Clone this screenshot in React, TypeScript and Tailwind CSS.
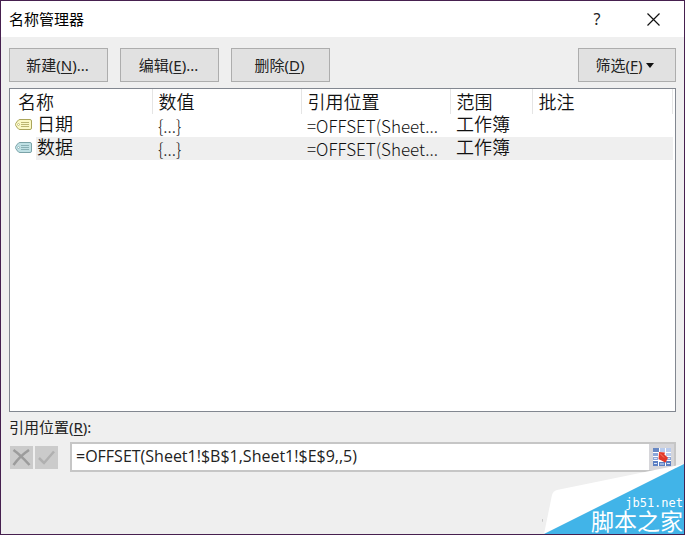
import { useState } from "react";

interface NameEntry {
  name: string;
  value: string;
  refersTo: string;
  scope: string;
  tone: "yellow" | "teal";
}

const entries: NameEntry[] = [
  { name: "日期", value: "{...}", refersTo: "=OFFSET(Sheet...", scope: "工作簿", tone: "yellow" },
  { name: "数据", value: "{...}", refersTo: "=OFFSET(Sheet...", scope: "工作簿", tone: "teal" },
];

function TagIcon({ tone }: { tone: NameEntry["tone"] }) {
  const [fill, stroke] = tone === "yellow" ? ["#fbf9c4", "#aba55c"] : ["#bfe0e4", "#7ba3a8"];
  return (
    <svg width="17" height="11" viewBox="0 0 17 11" fill="none" aria-hidden="true">
      <path d="M5 .5H15q1.500 0 1.500 1.500v7q0 1.500-1.500 1.500H5Q3.500 10.500 2.500 9L.7 6.500q-.5-1 0-2L2.500 2Q3.500.5 5 .5z" fill={fill} stroke={stroke} />
      <circle cx="3.500" cy="5.500" r="1" fill="#fff" stroke={stroke} strokeWidth=".6" />
      <path d="M6 3.500h8M6 5.500h8M6 7.500h8" stroke={stroke} strokeWidth=".8" />
    </svg>
  );
}

function RangePickerIcon() {
  return (
    <svg width="20" height="20" viewBox="0 0 20 20" aria-hidden="true">
      <path d="M1 1h18v18H1z" fill="#fff" />
      <path d="M1 1h6v4H1z" fill="#6687c4" />
      <path d="M8 1h5v4H8zM14 1h5v4h-5zM14 6h5v3h-5z" fill="#b9cbed" />
      <path d="M1 6h5v3H1zM1 10h5v3H1zM14 10h5v3h-5z" fill="#8ba6da" />
      <path d="M1 14h5v5H1zM7 15h6v4H7zM14 14h5v5h-5z" fill="#5b7fc3" />
      <path d="M2 16.500h3M8 17h4M15 16.500h3M2 11.500h3M15 11.500h3" stroke="#dce6f8" />
      <path d="M7 5l6 .5-.6 2 3.600 3.200-2.500 5-4.500-2.500-2.500-1z" fill="#e2382a" />
      <path d="M8 6.500l4 4" stroke="#f4836f" />
    </svg>
  );
}

function DialogButton({ text, hotkey, suffix }: { text: string; hotkey: string; suffix?: string }) {
  return (
    <button className="h-[34px] w-[99px] border border-[#adadad] bg-[#e1e1e1] pr-0.5 text-[15px] text-[#222]">
      {text}(<u className="underline-offset-2">{hotkey}</u>){suffix}
    </button>
  );
}

function Watermark() {
  return (
    <div className="pointer-events-none absolute right-0 bottom-0 h-[70px] w-[142px] text-white">
      <svg className="absolute inset-0" width="142" height="70" viewBox="0 0 142 70" aria-hidden="true">
        <path d="M0 55q1 4-3 4" stroke="#aaa" fill="none" />
        <path d="M2 70L10 31q1-4 5-5L142 0z" fill="#fff" />
        <path d="M2 70L142 0v70z" fill="#41b4e8" />
      </svg>
      <div className="relative flex h-full flex-col items-end justify-end pr-px">
        <span className="font-['DejaVu_Sans_Mono',monospace] text-xs leading-[14px]">jb51.net</span>
        <span className="font-['Liberation_Sans','Noto_Sans_CJK_SC',sans-serif] text-[23px] leading-6">脚本之家</span>
      </div>
    </div>
  );
}

export default function App() {
  const [formula, setFormula] = useState("=OFFSET(Sheet1!$B$1,Sheet1!$E$9,,5)");
  const [selected, setSelected] = useState(1);

  return (
    <div className="relative flex min-h-screen flex-col overflow-hidden border border-[#46204f] bg-[#efefef] font-['Noto_Sans','Noto_Sans_CJK_SC',sans-serif] text-[#222]">
      <header className="flex h-9 items-center justify-between bg-white pr-6 pl-2">
        <h1 className="text-[15px] text-black">名称管理器</h1>
        <div className="flex items-center gap-10">
          <button className="w-5 text-base" aria-label="帮助">?</button>
          <button aria-label="关闭">
            <svg width="13" height="13" viewBox="0 0 13 13" stroke="#111" strokeWidth="1.200" aria-hidden="true">
              <path d="M.5.5l12 12M12.500.5l-12 12" />
            </svg>
          </button>
        </div>
      </header>

      <main className="flex grow flex-col px-2 pt-[11px]">
        <div className="flex gap-3">
          <DialogButton text="新建" hotkey="N" suffix="..." />
          <DialogButton text="编辑" hotkey="E" suffix="..." />
          <DialogButton text="删除" hotkey="D" />
          <button className="ml-auto flex h-[34px] w-[98px] items-center justify-center gap-1 border border-[#adadad] bg-[#e1e1e1] pr-1 text-[15px]">
            <span>筛选(<u className="underline-offset-2">F</u>)</span>
            <svg width="8" height="5" viewBox="0 0 8 5" aria-hidden="true">
              <path d="M0 0h8L4 5z" fill="#111" />
            </svg>
          </button>
        </div>

        <div className="mt-1.5 h-[324px] border border-[#828790] bg-white pr-0.5">
          <table className="w-full table-fixed font-['Noto_Sans_CJK_SC',sans-serif] text-[18px] leading-[23px] font-[350] text-[#111]">
            <thead>
              <tr className="h-[25px] text-left">
                <th className="w-[142px] border-r border-[#e5e5e5] p-0 pl-2 font-[350]">名称</th>
                <th className="w-[149px] border-r border-[#e5e5e5] p-0 pl-1.5 font-[350]">数值</th>
                <th className="w-[149px] border-r border-[#e5e5e5] p-0 pl-1.5 font-[350]">引用位置</th>
                <th className="w-[82px] border-r border-[#e5e5e5] p-0 pl-1.5 font-[350]">范围</th>
                <th className="border-r border-[#e5e5e5] p-0 pl-1.5 font-[350]">批注</th>
              </tr>
            </thead>
            <tbody>
              {entries.map((entry, i) => (
                <tr key={entry.name} onClick={() => setSelected(i)} className={i === selected ? "bg-[#efefef]" : ""}>
                  <td className="p-0">
                    <div className="flex h-[23px]">
                      <span className="flex w-[26px] items-start bg-white pt-[5px] pl-[5px]">
                        <TagIcon tone={entry.tone} />
                      </span>
                      <span className="pl-px font-['Liberation_Sans','Noto_Sans_CJK_SC',sans-serif]">{entry.name}</span>
                    </div>
                  </td>
                  <td className="p-0 pl-1.5 text-[17px] font-light">{entry.value}</td>
                  <td className="p-0 pl-1.5 text-[17px] font-light">{entry.refersTo}</td>
                  <td className="p-0 pl-1.5 font-['Liberation_Sans','Noto_Sans_CJK_SC',sans-serif]">{entry.scope}</td>
                  <td />
                </tr>
              ))}
            </tbody>
          </table>
        </div>

        <label htmlFor="refers-to" className="mt-[3px] text-[15px] leading-6">
          引用位置(<u className="underline-offset-2">R</u>):
        </label>
        <div className="mt-[3px] flex items-center gap-3">
          <div className="flex gap-0.5 pl-px">
            <button className="flex size-[23px] items-center justify-center bg-[#cbcbcb]" aria-label="取消">
              <svg width="19" height="17" viewBox="0 0 19 17" fill="none" stroke="#9c9c9c" aria-hidden="true">
                <path d="M1.500 1q7 5 16 15M17 1Q8 7 1.500 16" strokeWidth="2.500" />
              </svg>
            </button>
            <button className="flex size-[23px] items-center justify-center bg-[#cbcbcb]" aria-label="确定">
              <svg width="17" height="15" viewBox="0 0 17 15" fill="none" stroke="#b0b0b0" aria-hidden="true">
                <path d="M1 8l5 5L16 1.500" strokeWidth="2.500" />
              </svg>
            </button>
          </div>
          <div className="flex h-[30px] grow border-2 border-[#c6c6c6] bg-white">
            <input
              id="refers-to"
              className="min-w-0 grow px-1 pb-0.5 font-['Open_Sans',sans-serif] text-base leading-6 outline-none"
              value={formula}
              onChange={(e) => setFormula(e.target.value)}
            />
            <button className="flex w-[25px] items-center justify-center bg-[#d6d6da]" aria-label="选择区域">
              <RangePickerIcon />
            </button>
          </div>
        </div>
      </main>

      <Watermark />
    </div>
  );
}
